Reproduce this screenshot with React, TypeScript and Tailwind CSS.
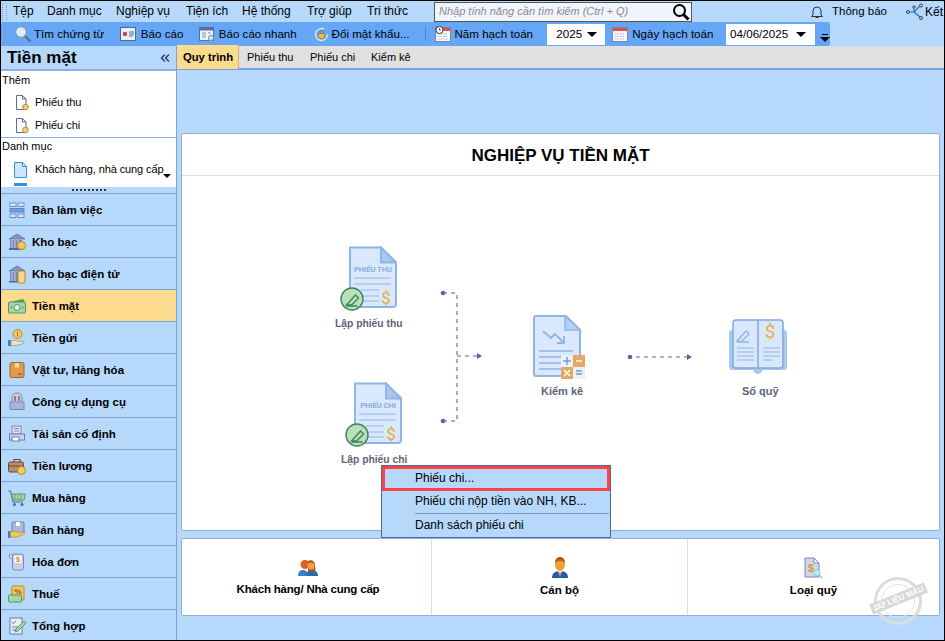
import React from 'react';
import { ChevronsLeft } from 'lucide-react';

const menus = [
  { label: 'Tệp', w: 'w-[34px]' },
  { label: 'Danh mục', w: 'w-[69px]' },
  { label: 'Nghiệp vụ', w: 'w-[70px]' },
  { label: 'Tiện ích', w: 'w-[56px]' },
  { label: 'Hệ thống', w: 'w-[65px]' },
  { label: 'Trợ giúp', w: 'w-[60px]' },
  { label: 'Tri thức', w: 'w-[60px]' },
];

const Caret = () => <span className="h-0 w-0 border-x-[5px] border-t-[5px] border-x-transparent border-t-black" />;

// small icons
const Magnifier = () => (
  <svg width="18" height="18" viewBox="0 0 18 18" fill="none">
    <circle cx="7" cy="7" r="5.5" fill="#dcecfb" stroke="#7a9cc4" strokeWidth="1.4" />
    <path d="M11 11l5.5 5.5" stroke="#5f6f8f" strokeWidth="2.2" />
  </svg>
);
const ReportIcon = () => (
  <svg width="16" height="16" viewBox="0 0 16 16" fill="none">
    <rect x=".5" y="1.5" width="15" height="13" fill="#e8f1fb" stroke="#53688f" />
    <circle cx="5" cy="8" r="2.3" fill="#c0504d" />
    <path d="M9 6h5M9 8h5M9 10h4" stroke="#53688f" />
  </svg>
);
const QuickReportIcon = () => (
  <svg width="17" height="17" viewBox="0 0 17 17" fill="none">
    <rect x=".5" y="1.5" width="14" height="13" fill="#eef4fb" stroke="#5b6ea3" />
    <rect x=".5" y="1.5" width="14" height="3" fill="#5b6ea3" />
    <path d="M3 7h4M3 9h4M3 11h4M9 7h3" stroke="#8296c0" />
    <circle cx="12" cy="12" r="2.6" fill="#cfe2f7" stroke="#7a8fb5" />
  </svg>
);
const LockIcon = () => (
  <svg width="17" height="17" viewBox="0 0 17 17" fill="none">
    <path d="M14.5 8.5a6 6 0 1 1-2-4.5" stroke="#dbe6f5" strokeWidth="1.4" />
    <path d="M11 2.5l2 1.7-2 1.3z" fill="#6f83a8" />
    <rect x="5.5" y="7.5" width="6" height="5" fill="#e7b84a" stroke="#a8802a" strokeWidth=".7" />
    <path d="M6.8 7.5V6a1.7 1.7 0 0 1 3.4 0v1.5" stroke="#777" />
  </svg>
);
const CalendarIcon = ({ clock }: { clock?: boolean }) => (
  <svg width="16" height="16" viewBox="0 0 16 16" fill="none">
    <rect x=".5" y="1.5" width="15" height="14" fill="#f4f6fa" stroke="#7d8797" />
    <rect x="1" y="2" width="14" height="3" fill="#d9534f" />
    <path d="M3 8h10M3 10.5h10M3 13h10" stroke="#b8c0cd" strokeDasharray="1.5 1" />
    {clock && <circle cx="4.5" cy="4" r="3.6" fill="#fff" stroke="#334" />}
    {clock && <path d="M4.5 2v2h1.6" stroke="#334" strokeWidth=".8" />}
  </svg>
);
const SideDoc = ({ dot }: { dot?: boolean }) =>
  dot ? (
    <svg width="14" height="16" viewBox="0 0 14 16" fill="none">
      <path d="M1.5.5h6l3.5 3.5v10.500h-9.500z" fill="#fff" stroke="#5a6ba5" />
      <path d="M7.500.5v3.500h3.500" stroke="#5a6ba5" />
      <circle cx="10.500" cy="12" r="2.800" fill="#f0cf72" stroke="#b99334" />
    </svg>
  ) : (
    <svg width="13" height="16" viewBox="0 0 13 16" fill="none">
      <path d="M.5.5h8l4 4v11h-12z" fill="#cfe6fb" stroke="#2f93e0" />
      <path d="M8.500.5v4h4z" fill="#fff" stroke="#2f93e0" />
    </svg>
  );

const navIcons: Record<string, React.ReactNode> = {
  desk: (
    <>
      <rect x="3" y="3" width="6" height="3.500" fill="#dbe8f8" stroke="#6f8fc6" />
      <rect x="11" y="3" width="6" height="3.500" fill="#dbe8f8" stroke="#6f8fc6" />
      <rect x="3" y="8.500" width="14" height="3.500" fill="#6fa0e0" stroke="#5b86c6" />
      <rect x="3" y="14" width="6" height="3.500" fill="#dbe8f8" stroke="#6f8fc6" />
      <rect x="11" y="14" width="6" height="3.500" fill="#dbe8f8" stroke="#6f8fc6" />
    </>
  ),
  bank: (
    <>
      <path d="M2 7l8-5 8 5z" fill="#8792c6" stroke="#5a6496" strokeWidth=".7" />
      <rect x="3" y="8" width="12" height="8" fill="#7a85bb" />
      <path d="M5 8v8M8 8v8M11 8v8" stroke="#c8cfea" />
      <rect x="2" y="16" width="14" height="2" fill="#5a6496" />
      <circle cx="14.500" cy="13.500" r="4" fill="#f2c95f" stroke="#b48a2c" />
    </>
  ),
  ebank: (
    <>
      <path d="M2 7l8-5 8 5z" fill="#8792c6" stroke="#5a6496" strokeWidth=".7" />
      <rect x="3" y="8" width="10" height="9" fill="#7a85bb" />
      <path d="M5 8v9M8 8v9" stroke="#c8cfea" />
      <rect x="2" y="17" width="12" height="1.500" fill="#5a6496" />
      <rect x="11" y="7" width="7" height="12" rx="1" fill="#f6d98a" stroke="#b48a2c" />
    </>
  ),
  cash: (
    <>
      <path d="M3 6l13-3 2 3z" fill="#4f9a63" />
      <rect x="1.500" y="6" width="17" height="11" rx="1" fill="#a5d6a7" stroke="#4f9a63" />
      <circle cx="10" cy="11.500" r="3" fill="#e3f3e4" stroke="#4f9a63" />
      <circle cx="4.500" cy="11.500" r="1" fill="#4f9a63" />
      <circle cx="15.500" cy="11.500" r="1" fill="#4f9a63" />
    </>
  ),
  deposit: (
    <>
      <circle cx="10.500" cy="6" r="4.500" fill="#f2c95f" stroke="#b48a2c" />
      <path d="M10.500 3.500v5" stroke="#a87d22" />
      <rect x="1" y="12" width="3" height="6" fill="#3f7fd0" />
      <path d="M4 13c3-2 5 0 7 0l6 .500c1 1-1 2-2 2.500l-6 1.500H4z" fill="#fbe3b0" stroke="#7a8fb5" strokeWidth=".7" />
    </>
  ),
  goods: (
    <>
      <rect x="3" y="2.500" width="14" height="15" rx="1.500" fill="#e49a45" stroke="#8f6a3e" />
      <rect x="8" y="3" width="4" height="4.500" fill="#f8d9a8" />
      <path d="M11 14h4" stroke="#7a4d1b" />
    </>
  ),
  tools: (
    <>
      <path d="M5 10V5a5 4 0 0 1 10 0v5" fill="#c9cfe6" stroke="#7f88b5" />
      <rect x="3" y="10" width="14" height="7.500" fill="#aab3da" stroke="#7f88b5" />
      <path d="M8 4v5M12 4v5" stroke="#9b5c3a" strokeWidth="1.500" />
    </>
  ),
  asset: (
    <>
      <rect x="5" y="2" width="9" height="8" fill="#dbe3f5" stroke="#7f88b5" />
      <path d="M7 4.500h5M7 7h5" stroke="#7f88b5" />
      <rect x="2.500" y="10" width="15" height="6" fill="#c6d2ee" stroke="#6f7aa8" />
      <rect x="5" y="13" width="7" height="4" fill="#fff" stroke="#6f7aa8" />
    </>
  ),
  salary: (
    <>
      <path d="M7 6V3.500h6V6" stroke="#6b4a3a" strokeWidth="1.200" />
      <rect x="1.500" y="6" width="15" height="10" rx="1.500" fill="#b98a6c" stroke="#6b4a3a" />
      <path d="M2 10h14" stroke="#6b4a3a" />
      <circle cx="14.500" cy="14.500" r="4" fill="#f2c95f" stroke="#b48a2c" />
    </>
  ),
  buy: (
    <>
      <path d="M1 3h2.500L6 14h10" stroke="#2f8a96" strokeWidth="1.200" />
      <path d="M4.500 6h14L17 12H6z" fill="#a9d79f" stroke="#56977d" />
      <path d="M8 6v6M11 6v6M14 6v6" stroke="#56977d" strokeWidth=".7" />
      <circle cx="7.500" cy="16.500" r="1.500" fill="#3f7788" />
      <circle cx="15" cy="16.500" r="1.500" fill="#3f7788" />
    </>
  ),
  sell: (
    <>
      <rect x="5" y="2" width="12" height="11" rx="1" fill="#aab8e0" stroke="#6f7aa8" />
      <rect x="9" y="2" width="4" height="4" fill="#fff" />
      <rect x="1" y="11" width="2.500" height="7" fill="#5a79b8" />
      <path d="M3.500 12c3-1.500 5 0 7 0l7 .500c1 1-1 2-2 2.500l-6 2H3.500z" fill="#f2c95f" stroke="#b48a2c" strokeWidth=".7" />
    </>
  ),
  invoice: (
    <>
      <path d="M2 3h4v3H3z" fill="#fff" stroke="#7f88b5" />
      <rect x="5.500" y="2" width="11" height="16" rx="2" fill="#c9cfe6" stroke="#7f88b5" />
      <rect x="7.500" y="4" width="7" height="7" fill="#fff" />
      <text x="11" y="10" fontSize="7" fontFamily="Liberation Sans" textAnchor="middle" fill="#c08a1e">$</text>
    </>
  ),
  tax: (
    <>
      <rect x="5" y="2" width="12" height="14" rx="1" fill="#f2c95f" stroke="#b48a2c" />
      <text x="11" y="10" fontSize="8" fontFamily="Liberation Sans" textAnchor="middle" fill="#b23a2a">%</text>
      <rect x="1.500" y="11" width="13" height="7" rx="1" fill="#a5d6a7" stroke="#4f9a63" />
    </>
  ),
  total: (
    <>
      <rect x="3" y="2" width="12" height="16" fill="#e8eef9" stroke="#6f7aa8" />
      <path d="M5 6l1.500 1.500L9 5M5 11h6M5 14h5" stroke="#6f7aa8" />
      <path d="M17 5l2 2-8 8-3 1 1-3z" fill="#a5d6a7" stroke="#4f9a63" />
    </>
  ),
};

const navItems = [
  ['Bàn làm việc', 'desk'],
  ['Kho bạc', 'bank'],
  ['Kho bạc điện tử', 'ebank'],
  ['Tiền mặt', 'cash'],
  ['Tiền gửi', 'deposit'],
  ['Vật tư, Hàng hóa', 'goods'],
  ['Công cụ dụng cụ', 'tools'],
  ['Tài sản cố định', 'asset'],
  ['Tiền lương', 'salary'],
  ['Mua hàng', 'buy'],
  ['Bán hàng', 'sell'],
  ['Hóa đơn', 'invoice'],
  ['Thuế', 'tax'],
  ['Tổng hợp', 'total'],
];

// flow diagram drawings
const DocDrawing = ({ title }: { title: string }) => (
  <svg width="58" height="66" viewBox="0 0 58 66" fill="none">
    <path d="M11 1.500h31l15 15V58a3 3 0 0 1-3 3H14a3 3 0 0 1-3-3z" fill="#d9e8fd" stroke="#8fb5e6" strokeWidth="2" />
    <path d="M42 1.500V16.500h15z" fill="#a9c8ee" stroke="#8fb5e6" strokeWidth="2" />
    <text x="34" y="26" fontSize="7.500" fontWeight="700" fontFamily="Roboto" textAnchor="middle" fill="#86aee4">{title}</text>
    <path d="M15 32h37M15 38h37M22 44h18M22 50h18M22 55h18" stroke="#8fb5e6" strokeWidth="1.200" />
    <text x="47" y="58" fontSize="17" fontFamily="Roboto" textAnchor="middle" fill="#e0b030">$</text>
    <circle cx="13" cy="53" r="11" fill="#b9e0b9" stroke="#3d8560" strokeWidth="1.400" />
    <path d="M7.500 59l9-10 3 3-7 7zM7.500 60h11" stroke="#3d8560" strokeWidth="1.400" />
  </svg>
);

const CountDrawing = () => (
  <svg width="54" height="64" viewBox="0 0 54 64" fill="none">
    <path d="M1 3a2 2 0 0 1 2-2h30l14 14v44a2 2 0 0 1-2 2H3a2 2 0 0 1-2-2z" fill="#d9e8fd" stroke="#8fb5e6" strokeWidth="2" />
    <path d="M32 1v14h15z" fill="#b5cff0" stroke="#8fb5e6" strokeWidth="1.500" />
    <path d="M10 16l8 7 4-4 9 9M31 21v7h-7" stroke="#8fb5e6" strokeWidth="1.800" />
    <path d="M6 36h34M6 42h22M6 48h22M6 54h22" stroke="#8fb5e6" strokeWidth="1.400" />
    <rect x="28" y="40" width="12" height="12" fill="#edf1f5" />
    <rect x="40" y="40" width="12" height="12" fill="#e3a964" />
    <rect x="28" y="52" width="12" height="12" fill="#e3a964" />
    <rect x="40" y="52" width="12" height="12" fill="#edf1f5" />
    <path d="M30 46h8M34 42v8M43 56h6M43 59h6" stroke="#6f9ad8" strokeWidth="1.400" />
    <path d="M43 46h6" stroke="#fff" strokeWidth="1.400" />
    <path d="M31 55l6 6M37 55l-6 6" stroke="#fff" strokeWidth="1.400" />
  </svg>
);

const BookDrawing = () => (
  <svg width="60" height="60" viewBox="0 0 60 60" fill="none">
    <path d="M1 15a3 3 0 0 1 3-3h52a3 3 0 0 1 3 3v34a3 3 0 0 1-3 3H4a3 3 0 0 1-3-3z" fill="#a9c8ee" />
    <path d="M25 51h10a5 5 0 0 1-10 0z" fill="#a9c8ee" />
    <rect x="5" y="2" width="50" height="48" rx="3" fill="#d9e8fd" stroke="#7fa8df" strokeWidth="1.500" />
    <path d="M30 2v48" stroke="#7fa8df" strokeWidth="1.500" />
    <path d="M9 23l9-10 3 3-8 8zM9 24h12" stroke="#8fb5e6" strokeWidth="1.400" />
    <path d="M9 30h17M9 34h17M9 38h17M9 42h17M35 30h17M35 34h17M35 38h17M35 42h10" stroke="#8fb5e6" strokeWidth="1.200" />
    <text x="42" y="20" fontSize="19" fontFamily="Roboto" textAnchor="middle" fill="#efb040">$</text>
  </svg>
);

const CustomerIcon = () => (
  <svg width="22" height="18" viewBox="0 0 22 18" fill="none">
    <path d="M1 17c0-4 2-6 5-6s5 2 5 6z" fill="#3d7fc4" />
    <path d="M9 17c0-4 3-6 6-6s6 2 6 6z" fill="#2f6aa8" />
    <circle cx="8" cy="5.500" r="4.500" fill="#d9641f" />
    <path d="M11 2c3-2 7 0 7 4 0 2 1 5 0 6h-7z" fill="#b3541a" />
    <circle cx="14" cy="7" r="3.500" fill="#f2a23c" />
  </svg>
);
const StaffIcon = () => (
  <svg width="18" height="23" viewBox="0 0 18 23" fill="none">
    <path d="M1 22c0-5 3-7 8-7s8 2 8 7z" fill="#1f5fa6" />
    <path d="M7 15l2 6 2-6z" fill="#fff" />
    <path d="M9 16v5" stroke="#c0392b" />
    <ellipse cx="9" cy="8" rx="5" ry="7" fill="#f0a030" />
    <path d="M4 7c0-8 10-8 10 0-3-3-7-3-10 0z" fill="#a85d1c" />
  </svg>
);
const FundIcon = () => (
  <svg width="20" height="24" viewBox="0 0 20 24" fill="none">
    <path d="M1 2h9l5 5v14H1z" fill="#cfd6ec" stroke="#7f88b5" />
    <path d="M10 2v5h5z" fill="#fff" stroke="#7f88b5" />
    <text x="7" y="16" fontSize="11" fontWeight="700" fontFamily="Liberation Sans" textAnchor="middle" fill="#e0962a">$</text>
    <circle cx="13" cy="17" r="3" fill="#bfeaf5" stroke="#86cfe3" />
    <path d="M15 19l3 3" stroke="#86cfe3" strokeWidth="1.500" />
  </svg>
);

export default function App() {
  return (
    <div className="relative flex h-[641px] w-[945px] flex-col overflow-hidden border border-black bg-[#b5d8fb] font-['Liberation_Sans',sans-serif] text-[12px] text-black">
      {/* menu row */}
      <div className="flex h-[21px] items-center">
        <div className="ml-[1px] h-[17px] w-[5px] border-x border-dotted border-[#7f9cc0]" />
        <div className="ml-[6px] flex w-[414px] pb-[2px]">
          {menus.map((m) => (
            <span key={m.label} className={m.w}>{m.label}</span>
          ))}
        </div>
        <div className="ml-[7px] flex h-[20px] w-[258px] items-center justify-between border border-[#555] bg-[#f1f5fe] pl-[4px] pr-[1px] text-[11px] italic text-[#8a8a8a]">
          <span>Nhập tính năng cần tìm kiếm (Ctrl + Q)</span>
          <svg width="18" height="18" viewBox="0 0 18 18" fill="none">
            <circle cx="7.500" cy="7.500" r="5.500" stroke="#000" strokeWidth="2" />
            <path d="M11.500 11.500l5 5" stroke="#000" strokeWidth="3" />
          </svg>
        </div>
        <svg className="ml-[118px]" width="14" height="14" viewBox="0 0 14 14" fill="none">
          <path d="M3 10V6a4 4 0 0 1 8 0v4l1.500 1.500h-11zM5.500 12.500h3" stroke="#333" />
        </svg>
        <span className="ml-[8px] w-[60px] text-[11.500px]">Thông báo</span>
        <svg className="ml-[14px]" width="19" height="18" viewBox="0 0 19 18" fill="none" stroke="#444">
          <circle cx="2" cy="9" r="1.500" />
          <circle cx="15" cy="2.500" r="1.500" />
          <circle cx="15" cy="15" r="1.500" />
          <circle cx="8" cy="4" r="1.200" />
          <path d="M3.500 9H8l6-6M8 9l6 5M8 9V5" strokeWidth="1.100" stroke="#2f6aa8" />
        </svg>
        <span className="whitespace-nowrap">Kết</span>
      </div>

      {/* toolbar */}
      <div className="flex h-[24px] w-[829px] items-center rounded-r-[2px] bg-[#66a6f7] text-[11.600px]">
        <div className="ml-[1px] h-[17px] w-[5px] border-x border-dotted border-[#88a6d0]" />
        <span className="ml-[7px]"><Magnifier /></span>
        <span className="ml-[2px] w-[86px]">Tìm chứng từ</span>
        <ReportIcon />
        <span className="ml-[5px] w-[58px]">Báo cáo</span>
        <QuickReportIcon />
        <span className="ml-[3px] w-[94px]">Báo cáo nhanh</span>
        <LockIcon />
        <span className="ml-[2px] w-[94px]">Đổi mật khẩu...</span>
        <div className="h-[14px] w-px bg-[#4f86cf]" />
        <span className="ml-[9px]"><CalendarIcon clock /></span>
        <span className="ml-[3px] w-[93px]">Năm hạch toán</span>
        <div className="flex h-[21px] w-[58px] items-center justify-between bg-white pl-[9px] pr-[8px]">
          2025 <Caret />
        </div>
        <span className="ml-[7px]"><CalendarIcon /></span>
        <span className="ml-[4px] w-[94px]">Ngày hạch toán</span>
        <div className="flex h-[21px] w-[89px] items-center justify-between bg-white pl-[4px] pr-[9px]">
          04/06/2025 <Caret />
        </div>
        <div className="ml-[5px] mt-[8px] flex flex-col items-center gap-[2px]">
          <div className="h-px w-[6px] bg-black" />
          <Caret />
        </div>
      </div>

      <div className="flex min-h-0 flex-1">
        {/* sidebar */}
        <aside className="flex w-[176px] shrink-0 flex-col border-r border-[#7fa3d0]">
          <div className="flex h-[25px] shrink-0 items-center justify-between border-b-2 border-[#8fb2dd] pl-[6px] pr-[4px] pt-[1px]">
            <span className="text-[17px] font-bold">Tiền mặt</span>
            <ChevronsLeft size={14} strokeWidth={2.500} className="text-[#1f3f7f]" />
          </div>
          <div className="h-[67px] shrink-0 border-b border-[#8fb2dd] bg-white pl-[1px] text-[11px]">
            <div className="pt-[2px] leading-[15px]">Thêm</div>
            <div className="mt-[3px] flex h-[23px] items-center gap-[6px] pl-[13px]"><SideDoc dot /><span>Phiếu thu</span></div>
            <div className="flex h-[23px] items-center gap-[6px] pl-[13px]"><SideDoc dot /><span>Phiếu chi</span></div>
          </div>
          <div className="relative h-[49px] shrink-0 overflow-hidden bg-white pl-[1px] text-[11px]">
            <div className="pt-[1px] leading-[15px]">Danh mục</div>
            <div className="mt-[4px] flex h-[23px] items-center gap-[8px] pl-[12px]"><SideDoc /><span className="whitespace-nowrap tracking-[-0.1px]">Khách hàng, nhà cung cấp</span></div>
            <div className="ml-[12px] mt-[2px] h-[3px] w-[13px] bg-[#2f93e0]" />
            <span className="absolute left-[162px] top-[36px] h-0 w-0 border-x-[4px] border-t-[4px] border-x-transparent border-t-black" />
          </div>
          <div className="flex h-[6px] shrink-0 items-center justify-center">
            <div className="h-[2px] w-[34px] border-t-2 border-dotted border-[#333]" />
          </div>
          <nav className="flex flex-1 flex-col">
            {navItems.map(([label, icon]) => (
              <div
                key={label}
                className={`flex h-[32px] shrink-0 items-center gap-[5px] border-t border-[#7fa3d0] pl-[6px] text-[11.500px] font-bold ${label === 'Tiền mặt' ? 'bg-[#fddb8e]' : ''}`}
              >
                <svg width="20" height="20" viewBox="0 0 20 20" fill="none" className="shrink-0">{navIcons[icon]}</svg>
                <span className="pt-[2px]">{label}</span>
              </div>
            ))}
          </nav>
        </aside>

        {/* main */}
        <main className="flex min-w-0 flex-1 flex-col">
          <div className="flex h-[24px] shrink-0 items-center border-b-2 border-[#6fa3e6] bg-[#e0e0e0] text-[11px]">
            <div className="flex h-[24px] w-[62px] items-center justify-center border-r border-[#c9b277] bg-[#fddb8e] pl-[1px] pt-[1px] text-[11.300px] font-bold">Quy trình</div>
            <span className="ml-[8px] w-[63px]">Phiếu thu</span>
            <span className="w-[61px]">Phiếu chi</span>
            <span>Kiểm kê</span>
          </div>
          <div className="flex flex-1 flex-col px-[4px] pb-[24px] pt-[63px]">
            <section className="flex h-[398px] flex-col rounded-[2px] border border-[#8fb0dc] bg-white">
              <h1 className="flex h-[42px] shrink-0 items-center justify-center border-b border-[#d5dfea] pt-[2px] text-[17px] font-bold">NGHIỆP VỤ TIỀN MẶT</h1>
              <div className="relative flex-1">
                <div className="absolute left-[156px] top-[70px] flex w-[60px] flex-col items-center">
                  <DocDrawing title="PHIẾU THU" />
                </div>
                <span className="absolute left-[153px] top-[140px] whitespace-nowrap text-[10.300px] font-bold text-[#5b6477]">Lập phiếu thu</span>
                <div className="absolute left-[162px] top-[206px]">
                  <DocDrawing title="PHIẾU CHI" />
                </div>
                <span className="absolute left-[159px] top-[276px] whitespace-nowrap text-[10.300px] font-bold text-[#5b6477]">Lập phiếu chi</span>

                <svg className="absolute left-[255px] top-[110px]" width="50" height="140" viewBox="0 0 50 140" fill="none">
                  <path d="M6 7h14v128H6M20 70h24" stroke="#5566a8" strokeWidth="1.100" strokeDasharray="4 4" />
                  <circle cx="6" cy="7" r="2.300" fill="#5566a8" />
                  <circle cx="6" cy="135" r="2.300" fill="#5566a8" />
                  <path d="M40 67l5 3-5 3z" fill="#5566a8" />
                </svg>

                <div className="absolute left-[351px] top-[139px]"><CountDrawing /></div>
                <span className="absolute left-[359px] top-[207px] whitespace-nowrap text-[11px] font-bold text-[#5b6477]">Kiểm kê</span>

                <svg className="absolute left-[445px] top-[175px]" width="66" height="12" viewBox="0 0 66 12" fill="none">
                  <circle cx="3" cy="6" r="2.300" fill="#5566a8" />
                  <path d="M9 6h52" stroke="#5566a8" strokeWidth="1.100" strokeDasharray="4 4" />
                  <path d="M60 3l5 3-5 3z" fill="#5566a8" />
                </svg>

                <div className="absolute left-[546px] top-[142px]"><BookDrawing /></div>
                <span className="absolute left-[560px] top-[207px] whitespace-nowrap text-[11px] font-bold text-[#5b6477]">Sổ quỹ</span>
              </div>
            </section>
            <section className="mt-[7px] grid h-[78px] shrink-0 grid-cols-[250px_256px_1fr] rounded-[2px] border border-[#8fb0dc] bg-white text-[11.500px] font-bold">
              <div className="flex flex-col items-center justify-center gap-[4px] border-r border-[#d5dfea] pt-[4px] pl-[3px]">
                <CustomerIcon />
                <span className="tracking-[-0.2px]">Khách hàng/ Nhà cung cấp</span>
              </div>
              <div className="flex flex-col items-center justify-center gap-[3px] border-r border-[#d5dfea] pt-[2px]">
                <StaffIcon />
                <span>Cán bộ</span>
              </div>
              <div className="flex flex-col items-center justify-center gap-[2px] pt-[2px]">
                <FundIcon />
                <span>Loại quỹ</span>
              </div>
            </section>
          </div>
        </main>
      </div>

      {/* context menu */}
      <div className="absolute left-[380px] top-[464px] w-[230px] border border-[#4a6a9a] bg-[#b5d8fb] pb-[1px]">
        <div className="flex h-[25px] items-center pb-[2px] pl-[33px] outline outline-[3px] -outline-offset-[3px] outline-[#fb4248]">Phiếu chi...</div>
        <div className="flex h-[21px] items-center pb-[1px] pl-[33px]">Phiếu chi nộp tiền vào NH, KB...</div>
        <div className="ml-[33px] mr-[1px] mt-[1px] h-px bg-[#8a9bb0]" />
        <div className="flex h-[22px] items-center pl-[33px]">Danh sách phiếu chi</div>
      </div>

      {/* sample data stamp */}
      <div className="absolute left-[873px] top-[576px] flex h-[48px] w-[48px] items-center justify-center rounded-full border-[3px] border-[#dcdcdc]">
        <div className="h-[34px] w-[34px] rounded-full border border-[#e2e2e2]" />
      </div>
      <div className="absolute left-[868px] top-[592px] -rotate-[22deg] whitespace-nowrap bg-[#d8d8d8] px-[3px] text-[8px] font-bold leading-[11px] text-white">DỮ LIỆU MẪU</div>
    </div>
  );
}
